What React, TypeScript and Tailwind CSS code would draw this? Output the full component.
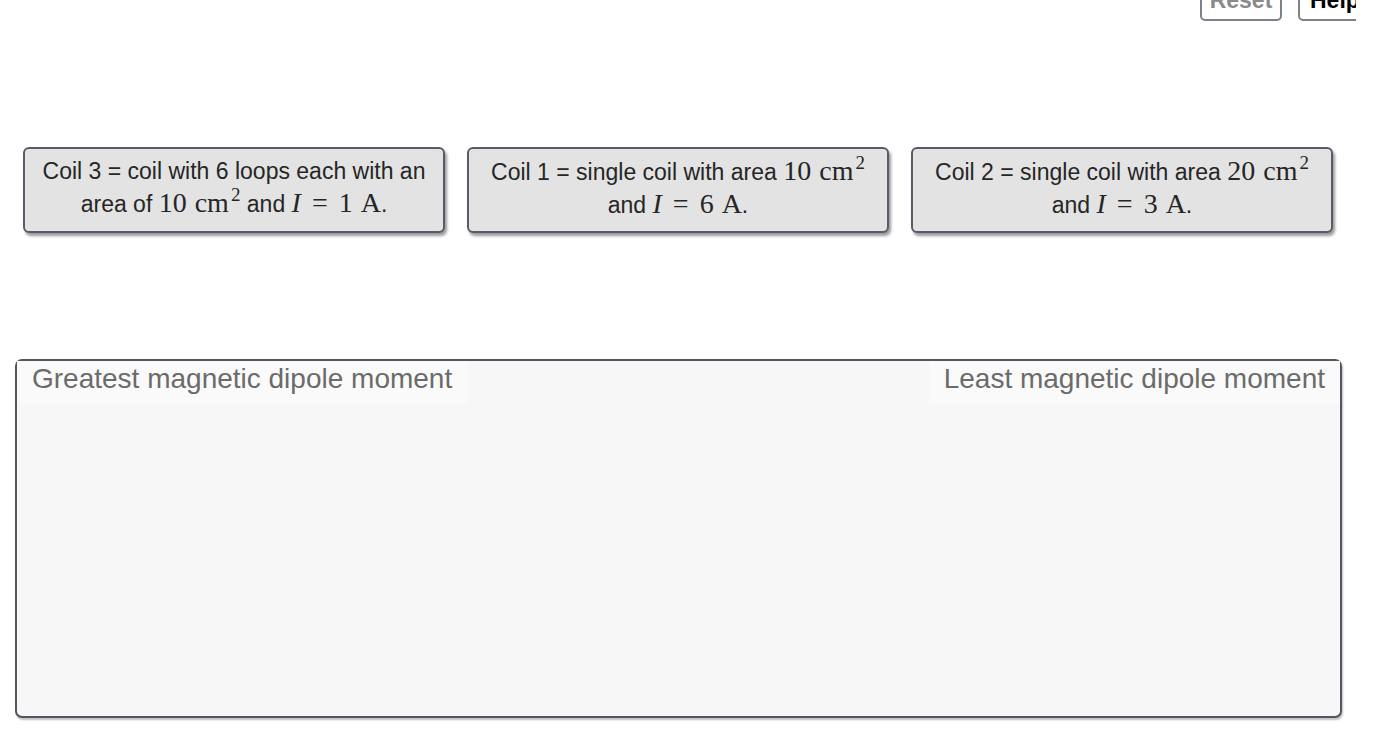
import type { ReactNode } from "react";

const math = "font-['Liberation_Serif','DejaVu_Serif',serif] text-[28px]";

function M({ children }: { children: ReactNode }) {
  return <span className={math}>{children}</span>;
}

function Sup({ children }: { children: ReactNode }) {
  return <sup className="relative -top-[11px] ml-[2px] text-[19px]">{children}</sup>;
}

function Eq() {
  return <span className="px-[11px]">=</span>;
}

function Unit({ children }: { children: ReactNode }) {
  return <span className="ml-[8px]">{children}</span>;
}

function CoilCard({ children }: { children: ReactNode }) {
  return (
    <div className="flex h-[86px] w-[422px] items-center justify-center rounded-[6px] border-2 border-[#5a5a69] bg-[#e3e3e3] px-2 pb-[4px] text-center text-[23px] leading-[31px] text-[#262626] shadow-[2px_3px_3px_rgba(0,0,0,0.4)]">
      <div>{children}</div>
    </div>
  );
}

export default function App() {
  return (
    <div className="relative h-[742px] w-[1374px] overflow-hidden bg-white font-['Liberation_Sans',Arial,sans-serif]">
      <div className="flex w-[1356px] items-start justify-end gap-[16px] overflow-hidden">
        <button
          type="button"
          className="-mt-[19px] flex h-[40px] w-[82px] items-end justify-center rounded-[5px] border-2 border-[#7b8289] bg-white pb-[7px] text-[23px] font-bold leading-none text-[#8a8a8a]"
        >
          Reset
        </button>
        <button
          type="button"
          className="-mr-[14px] -mt-[19px] flex h-[40px] w-[72px] shrink-0 items-end rounded-[5px] border-2 border-[#7b8289] bg-white pb-[7px] pl-[10px] text-[23px] font-bold leading-none text-black"
        >
          Help
        </button>
      </div>

      <div className="mt-[126px] flex gap-[22px] pl-[23px]">
        <CoilCard>
          Coil 3 = coil with 6 loops each with an
          <br />
          area of{" "}
          <M>
            10<Unit>cm</Unit>
            <Sup>2</Sup>
          </M>{" "}
          and{" "}
          <M>
            <i>I</i>
            <Eq />1<Unit>A</Unit>
          </M>
          .
        </CoilCard>
        <CoilCard>
          Coil 1 = single coil with area{" "}
          <M>
            10<Unit>cm</Unit>
            <Sup>2</Sup>
          </M>
          <br />
          and{" "}
          <M>
            <i>I</i>
            <Eq />6<Unit>A</Unit>
          </M>
          .
        </CoilCard>
        <CoilCard>
          Coil 2 = single coil with area{" "}
          <M>
            20<Unit>cm</Unit>
            <Sup>2</Sup>
          </M>
          <br />
          and{" "}
          <M>
            <i>I</i>
            <Eq />3<Unit>A</Unit>
          </M>
          .
        </CoilCard>
      </div>

      <div className="ml-[15px] mt-[126px] h-[359px] w-[1327px] rounded-[7px] border-2 border-[#55555f] bg-[#f7f7f7] shadow-[1px_2px_2px_rgba(0,0,0,0.25)]">
        <div className="flex justify-between">
          <div className="h-[43px] w-[451px] bg-[#fafafa] pl-[15px] text-[28px] leading-[36px] text-[#6b6b6b]">
            Greatest magnetic dipole moment
          </div>
          <div className="h-[43px] w-[411px] bg-[#fafafa] pr-[15px] text-right text-[28px] leading-[36px] text-[#6b6b6b]">
            Least magnetic dipole moment
          </div>
        </div>
      </div>
    </div>
  );
}
